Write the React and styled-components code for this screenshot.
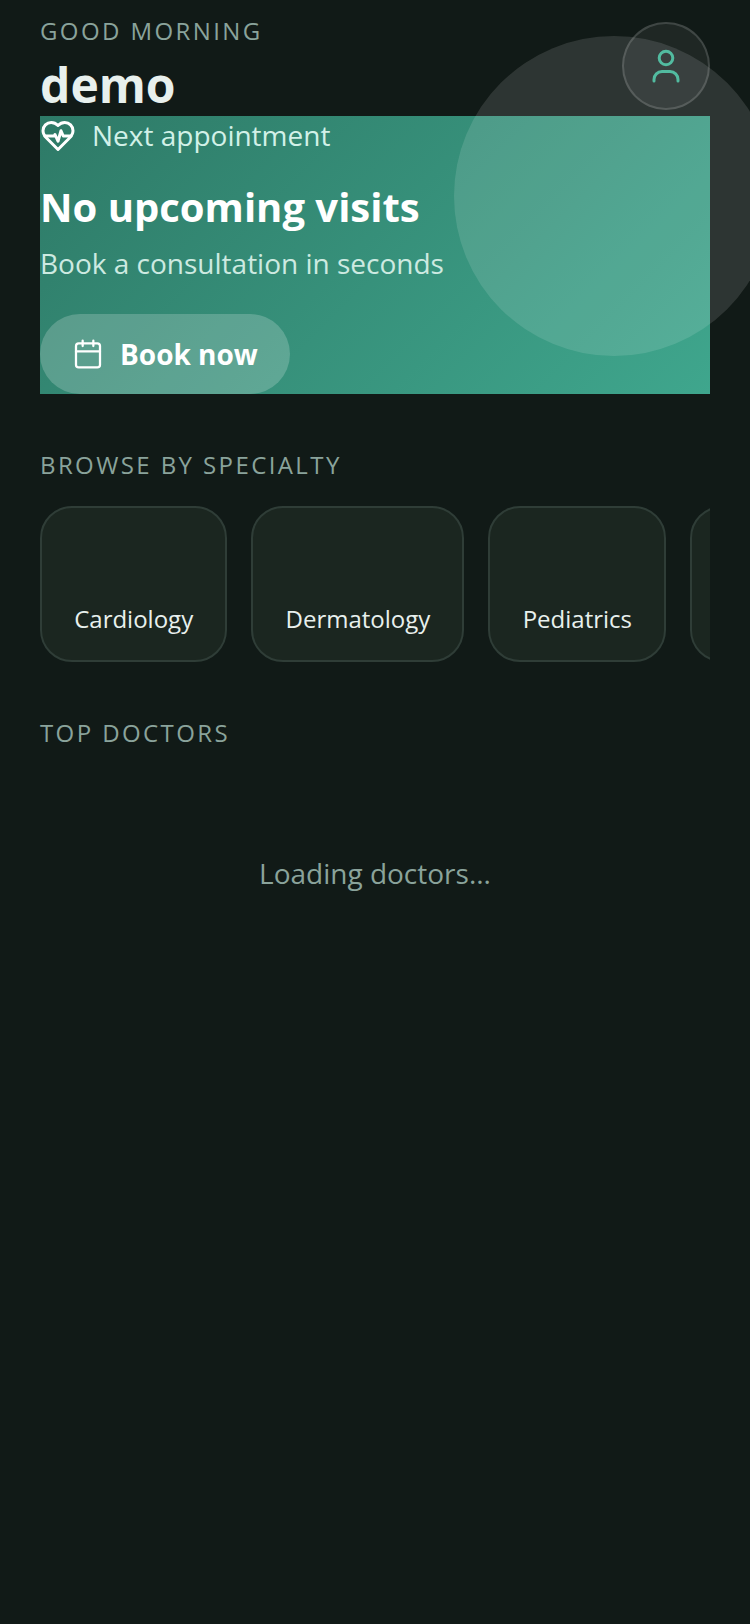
import React from 'react';
import styled, { createGlobalStyle } from 'styled-components';

const Global = createGlobalStyle`
  html, body { margin: 0; padding: 0; background: #111a17; }
  body { font-family: "Open Sans", "Liberation Sans", sans-serif; }
  * { box-sizing: border-box; }
`;

const Screen = styled.div`
  width: 750px;
  min-height: 1624px;
  background: #111a17;
  padding: 14px 40px 0;
`;
const Header = styled.header`
  display: flex;
  justify-content: space-between;
  align-items: flex-start;
  height: 102px;
`;
const Greeting = styled.div`
  font-size: 24px;
  line-height: 34px;
  letter-spacing: 2.4px;
  color: #8aa39b;
  text-transform: uppercase;
`;
const Name = styled.div`
  margin-top: 5px;
  font-size: 48px;
  line-height: 64px;
  font-weight: 700;
  color: #e8f0ed;
`;
const Avatar = styled.div`
  width: 88px;
  height: 88px;
  margin-top: 8px;
  border-radius: 50%;
  background: rgba(255, 255, 255, 0.06);
  border: 2px solid rgba(255, 255, 255, 0.15);
  display: flex;
  align-items: center;
  justify-content: center;
  position: relative;
  z-index: 2;
`;
const Hero = styled.section`
  position: relative;
  height: 278px;
  background: linear-gradient(135deg, #2e7a67 0%, #3fa68d 100%);
  display: flex;
  flex-direction: column;
  align-items: flex-start;
`;
const Glow = styled.div`
  position: absolute;
  top: -80px;
  right: -64px;
  width: 320px;
  height: 320px;
  border-radius: 50%;
  background: rgba(255, 255, 255, 0.12);
`;
const HeroLabel = styled.div`
  display: flex;
  align-items: flex-start;
  gap: 16px;
  font-size: 28px;
  line-height: 38px;
  color: #d2f1e8;
  svg { flex: none; margin-top: 2px; }
`;
const HeroTitle = styled.h1`
  margin: 26px 0 0;
  font-size: 40px;
  line-height: 54px;
  font-weight: 700;
  color: #fff;
`;
const HeroSub = styled.p`
  margin: 9px 0 0;
  font-size: 28px;
  line-height: 40px;
  color: #cdeae1;
`;
const BookButton = styled.button`
  margin-top: 31px;
  height: 80px;
  padding: 0 32px;
  border: 0;
  border-radius: 40px;
  background: rgba(255, 255, 255, 0.2);
  color: #fff;
  display: flex;
  align-items: center;
  gap: 16px;
  font: 700 28px "Open Sans", sans-serif;
`;
const SectionLabel = styled.h2`
  margin: 54px 0 0;
  font-size: 24px;
  line-height: 34px;
  font-weight: 400;
  letter-spacing: 2.4px;
  text-transform: uppercase;
  color: #8aa39b;
`;
const Chips = styled.div`
  display: flex;
  gap: 24px;
  margin-top: 24px;
  overflow: hidden;
`;
const Chip = styled.div`
  flex: none;
  min-width: 160px;
  height: 156px;
  padding: 0 32.18px 24px;
  border-radius: 32px;
  background: #1b2620;
  border: 2px solid #2f3d37;
  display: flex;
  align-items: flex-end;
  font-size: 24px;
  line-height: 34px;
  color: #e8f0ed;
`;
const Loading = styled.div`
  margin-top: 103px;
  text-align: center;
  font-size: 28px;
  line-height: 40px;
  color: #8aa39b;
`;

const HeartPulse = () => (
  <svg width="36" height="36" viewBox="0 0 24 24" fill="none" stroke="#fff" strokeWidth="2" strokeLinecap="round" strokeLinejoin="round">
    <path d="M19 14c1.49-1.46 3-3.21 3-5.5A5.5 5.5 0 0 0 16.5 3c-1.76 0-3 .5-4.5 2-1.5-1.5-2.74-2-4.5-2A5.5 5.5 0 0 0 2 8.5c0 2.3 1.5 4.05 3 5.5l7 7Z" />
    <path d="M3.22 12H9.5l.5-1 2 4.5 2-7 1.5 3.5h5.27" />
  </svg>
);
const CalendarIcon = () => (
  <svg width="32" height="32" viewBox="0 0 24 24" fill="none" stroke="#fff" strokeWidth="1.7" strokeLinecap="round" strokeLinejoin="round">
    <path d="M8 2v4" /><path d="M16 2v4" />
    <rect x="3" y="4" width="18" height="18" rx="2" />
    <path d="M3 10h18" />
  </svg>
);
const UserIcon = () => (
  <svg width="40" height="40" viewBox="0 0 40 40" fill="none" stroke="#52bba0" strokeWidth="3" strokeLinecap="round">
    <circle cx="20" cy="12" r="6.8" />
    <path d="M8 35v-1.5a8 8 0 0 1 8-8h8a8 8 0 0 1 8 8V35" />
  </svg>
);

export default function App() {
  return (
    <Screen>
      <Global />
      <Header>
        <div>
          <Greeting>Good morning</Greeting>
          <Name>demo</Name>
        </div>
        <Avatar><UserIcon /></Avatar>
      </Header>
      <Hero>
        <Glow />
        <HeroLabel><HeartPulse />Next appointment</HeroLabel>
        <HeroTitle>No upcoming visits</HeroTitle>
        <HeroSub>Book a consultation in seconds</HeroSub>
        <BookButton><CalendarIcon />Book now</BookButton>
      </Hero>
      <SectionLabel>Browse by specialty</SectionLabel>
      <Chips>
        <Chip>Cardiology</Chip>
        <Chip>Dermatology</Chip>
        <Chip>Pediatrics</Chip>
        <Chip />
      </Chips>
      <SectionLabel>Top doctors</SectionLabel>
      <Loading>Loading doctors...</Loading>
    </Screen>
  );
}
